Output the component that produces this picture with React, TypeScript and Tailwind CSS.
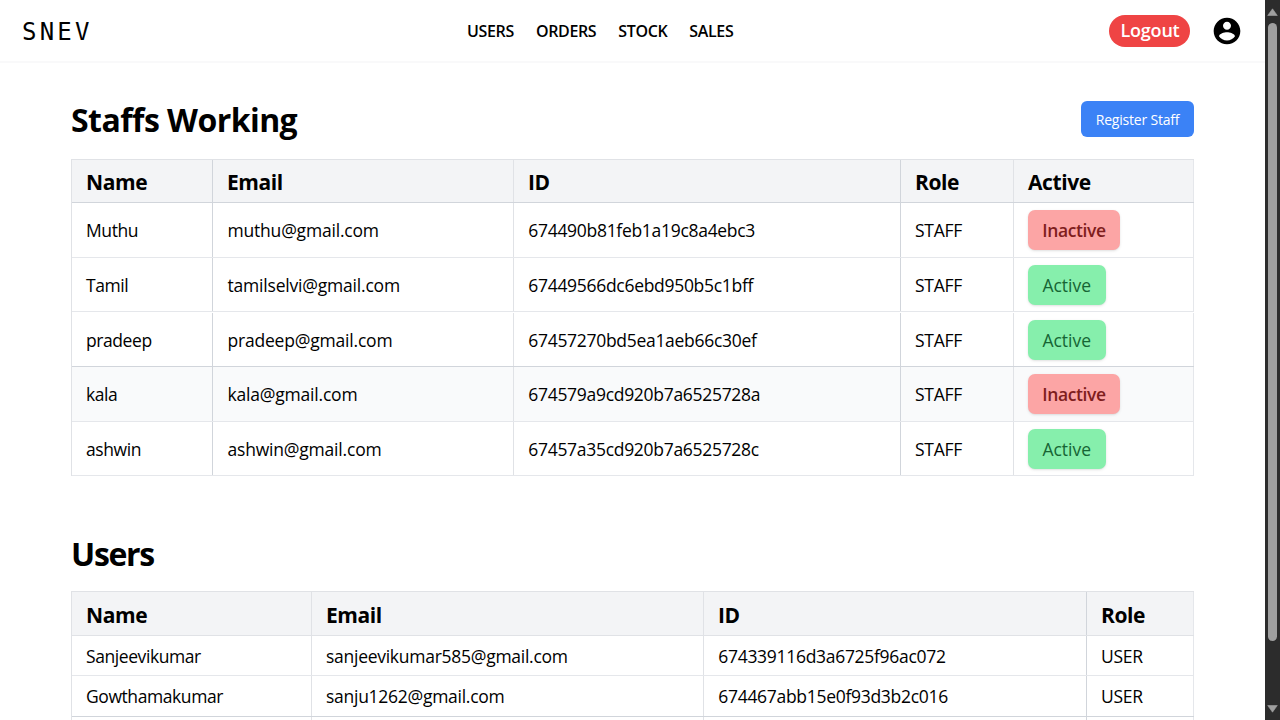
import type { ReactNode } from "react";

type Staff = { name: string; email: string; id: string; active: boolean; row: string };
type User = { name: string; email: string; id: string; row: string };

const staffs: Staff[] = [
  { name: "Muthu", email: "muthu@gmail.com", id: "674490b81feb1a19c8a4ebc3", active: false, row: "h-[55px] border-[#e5e7eb]" },
  { name: "Tamil", email: "tamilselvi@gmail.com", id: "67449566dc6ebd950b5c1bff", active: true, row: "h-[54px] border-[#e5e7eb]" },
  { name: "pradeep", email: "pradeep@gmail.com", id: "67457270bd5ea1aeb66c30ef", active: true, row: "h-[55px] border-[#d1d5db] pt-px" },
  { name: "kala", email: "kala@gmail.com", id: "674579a9cd920b7a6525728a", active: false, row: "h-[55px] border-[#e5e7eb] bg-[#f9fafb]" },
  { name: "ashwin", email: "ashwin@gmail.com", id: "67457a35cd920b7a6525728c", active: true, row: "h-[54px] border-[#e5e7eb]" },
];

const users: User[] = [
  { name: "Sanjeevikumar", email: "sanjeevikumar585@gmail.com", id: "674339116d3a6725f96ac072", row: "h-10 border-[#e5e7eb]" },
  { name: "Gowthamakumar", email: "sanju1262@gmail.com", id: "674467abb15e0f93d3b2c016", row: "h-[41px] border-[#d1d5db]" },
  { name: "", email: "", id: "", row: "h-10 border-[#e5e7eb]" },
];

const staffCols = [
  "w-[141px] border-[#d1d5db]",
  "w-[301px] border-[#e0e2e6]",
  "w-[387px] border-[#d1d5db]",
  "w-[113px] border-[#e0e2e6]",
  "w-[180px] border-[#e5e7eb]",
];
const userCols = [
  "w-60 border-[#e0e2e6]",
  "w-[392px] border-[#e0e2e6]",
  "w-[383px] border-[#d1d5db]",
  "w-[107px] border-[#e5e7eb]",
];

function Row({ cols, className, cells }: { cols: string[]; className: string; cells: ReactNode[] }) {
  return (
    <div className={`flex border-b ${className}`}>
      {cells.map((cell, i) => (
        <div key={i} className={`flex shrink-0 items-center border-r pl-3.5 ${cols[i]}`}>
          {cell}
        </div>
      ))}
    </div>
  );
}

function Header({ labels }: { labels: string[] }) {
  return labels.map((label) => (
    <span key={label} className="pt-0.5 text-[21px] leading-7 font-bold tracking-[-0.4px]">
      {label}
    </span>
  ));
}

function Status({ active }: { active: boolean }) {
  return active ? (
    <span className="flex h-10 w-[77.5px] items-center justify-center rounded-[7px] bg-[#86efac] text-[#166534] shadow-sm">Active</span>
  ) : (
    <span className="flex h-10 w-[92px] items-center justify-center rounded-[7px] bg-[#fca5a5] font-semibold tracking-[-0.4px] text-[#7f1d1d] shadow-sm">Inactive</span>
  );
}

const name = (value: string) => <span className="tracking-[-0.42px]">{value}</span>;
const email = (value: string) => <span className="pl-[0.5px] tracking-[-0.2px]">{value}</span>;
const userEmail = (value: string) => <span className="tracking-[-0.27px]">{value}</span>;
const id = (value: string) => <span className="pl-[0.3px] tracking-[-0.3px]">{value}</span>;
const role = (value: string) => <span className="tracking-[-0.3px]">{value}</span>;

export default function App() {
  return (
    <div className="flex h-[720px] w-[1280px] overflow-hidden bg-white font-['Open_Sans',sans-serif] text-black">
      <div className="flex w-[1265px] shrink-0 flex-col overflow-hidden">
        <header className="flex h-[63px] shrink-0 items-center border-b-2 border-[#f9f9fa]">
          <div className="w-[467px] pt-0.5 pl-[22px] font-['DejaVu_Sans_Mono',monospace] text-[24px] leading-8 tracking-[3.2px]">SNEV</div>
          <nav className="flex w-[642px] gap-[22px] pt-px text-[16px] leading-6 font-semibold tracking-[-0.35px]">
            <a>USERS</a>
            <a>ORDERS</a>
            <a>STOCK</a>
            <a>SALES</a>
          </nav>
          <button className="flex h-8 w-[81px] items-center justify-center rounded-full bg-[#ef4444] pl-px text-[18px] font-semibold tracking-[-0.2px] text-white">Logout</button>
          <svg className="ml-[21px] size-8" viewBox="0 0 24 24" fill="currentColor">
            <path d="M12 2C6.48 2 2 6.48 2 12s4.48 10 10 10 10-4.48 10-10S17.52 2 12 2zm0 3c1.66 0 3 1.34 3 3s-1.34 3-3 3-3-1.34-3-3 1.34-3 3-3zm0 14.2c-2.5 0-4.71-1.28-6-3.22.03-1.99 4-3.08 6-3.08 1.99 0 5.97 1.09 6 3.08-1.29 1.94-3.5 3.22-6 3.22z" />
          </svg>
        </header>

        <main className="flex flex-col pr-[71px] pl-[71px] text-[17.5px] leading-7">
          <div className="flex h-24 items-start justify-between">
            <h1 className="pt-[37px] text-[32px] leading-10 font-bold tracking-[-0.55px]">Staffs Working</h1>
            <button className="mt-[38px] flex h-9 w-[113px] items-center justify-center rounded-md bg-[#3b82f6] pt-0.5 text-[14px] tracking-[-0.2px] text-white">Register Staff</button>
          </div>
          <section className="w-[1123px] border-t border-l border-[#e0e2e6]">
            <Row cols={staffCols} className="h-[43px] border-[#d1d5db] bg-[#f3f4f6]" cells={Header({ labels: ["Name", "Email", "ID", "Role", "Active"] })} />
            {staffs.map((s) => (
              <Row key={s.id} cols={staffCols} className={s.row} cells={[name(s.name), email(s.email), id(s.id), role("STAFF"), <Status active={s.active} />]} />
            ))}
          </section>

          <h2 className="h-[115px] pt-[58px] text-[32px] leading-10 font-bold tracking-[-1.3px]">Users</h2>
          <section className="w-[1123px] border-t border-l border-[#e0e2e6]">
            <Row cols={userCols} className="h-11 border-[#e0e2e6] bg-[#f3f4f6]" cells={Header({ labels: ["Name", "Email", "ID", "Role"] })} />
            {users.map((u, i) => (
              <Row key={i} cols={userCols} className={u.row} cells={[name(u.name), userEmail(u.email), id(u.id), role(u.name ? "USER" : "")]} />
            ))}
          </section>
        </main>
      </div>

      <aside className="flex w-[15px] shrink-0 flex-col items-center bg-[#2c2c2c]">
        <svg className="mt-2 h-2 w-[11px]" viewBox="0 0 11 8" fill="#9f9f9f">
          <path d="M5.5 0.8 10.3 7.5H.7Z" stroke="#9f9f9f" strokeWidth=".6" strokeLinejoin="round" />
        </svg>
        <div className="mt-[7px] h-[618px] w-[9px] rounded-full bg-[#9f9f9f]" />
        <svg className="mt-16 h-2 w-[11px]" viewBox="0 0 11 8" fill="#9f9f9f">
          <path d="M5.5 7.2.7.5H10.3Z" stroke="#9f9f9f" strokeWidth=".6" strokeLinejoin="round" />
        </svg>
      </aside>
    </div>
  );
}
